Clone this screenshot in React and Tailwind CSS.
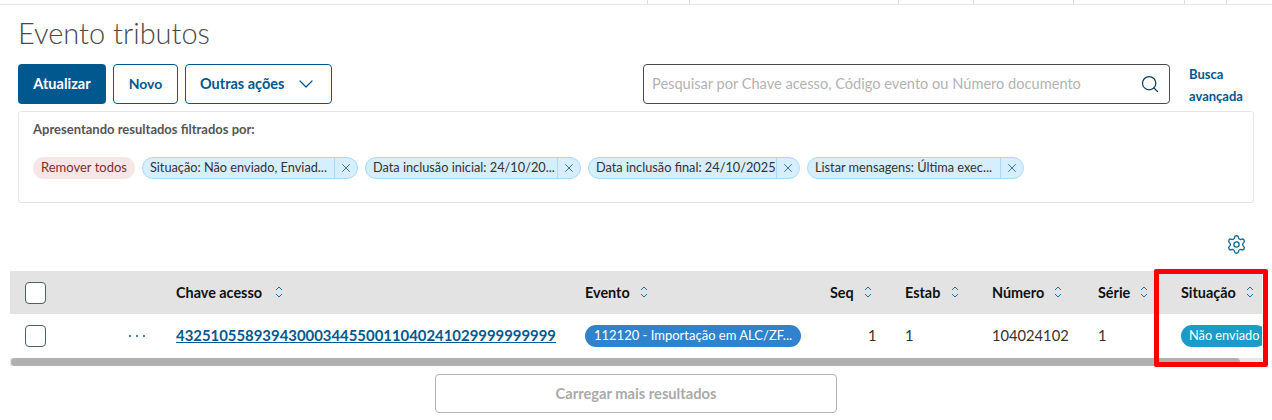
import React from 'react';
import { ChevronDown, Search, Settings, X } from 'lucide-react';

const topTabs = ['w-[648px]', 'w-[42px]', 'w-[209px]', 'w-[75px]', 'w-[100px]', 'w-[111px]', 'w-[42px]'];

const filters = [
    { label: 'Situação: Não enviado, Enviad...', width: 'w-[191px]' },
    { label: 'Data inclusão inicial: 24/10/20...', width: 'w-[191px]' },
    { label: 'Data inclusão final: 24/10/2025', width: 'w-[187px]' },
    { label: 'Listar mensagens: Última exec...', width: 'w-[192px]' },
];

const columns = [
    { label: 'Chave acesso', width: 'w-[409px]', gap: 'ml-[13px]' },
    { label: 'Evento', width: 'w-[245px]', gap: 'ml-[10px]' },
    { label: 'Seq', width: 'w-[75px]', gap: 'ml-[10px]' },
    { label: 'Estab', width: 'w-[87px]', gap: 'ml-[11px]' },
    { label: 'Número', width: 'w-[106px]', gap: 'ml-[10px]' },
    { label: 'Série', width: 'w-[83px]', gap: 'ml-[10px]' },
    { label: 'Situação', width: 'w-[81px]', gap: 'ml-[10px]' },
];

const SortIcon = ({ gap }) => (
    <svg width="8" height="12" viewBox="0 0 8 12" fill="none" stroke="#1a6fa3" strokeWidth="1" className={`${gap} shrink-0`}>
        <path d="M1 4 L4 1 L7 4" />
        <path d="M1 8 L4 11 L7 8" />
    </svg>
);

const Checkbox = () => <div className="w-[21px] h-[22px] bg-white border border-[#4f5f68] rounded-[4px]" />;

const FilterChip = ({ label, width }) => (
    <div className="flex h-[22px] items-center bg-[#d6eefd] border border-[#a9daf9] rounded-full text-[#333333] text-[12.75px]">
        <span className={`${width} pl-[7px] whitespace-nowrap`}>{label}</span>
        <span className="flex items-center justify-center w-[23px] h-full border-l border-[#a9daf9]">
            <X className="w-[14px] h-[14px] text-[#0c4a70]" strokeWidth={1.25} />
        </span>
    </div>
);

export default function App() {
    return (
        <div className="relative w-[1272px] h-[420px] overflow-hidden bg-white font-['Lato','Noto_Sans',sans-serif]">
            <div className="flex h-[5px] border-b border-[#e5e5e5]">
                {topTabs.map((width, i) => (
                    <div key={i} className={`${width} h-full border-r border-[#dddddd]`} />
                ))}
            </div>

            <h1 className="ml-[18px] mt-[10px] h-[37px] text-[29px] leading-[36px] font-light text-[#4a4a4a]">Evento tributos</h1>

            <div className="flex mt-[12px] ml-[18px]">
                <button className="w-[88px] h-10 bg-[#00588f] rounded-[4px] text-white text-[14.5px] font-bold">Atualizar</button>
                <button className="w-[65px] h-10 ml-[7px] border border-[#00588f] rounded-[4px] text-[#00588f] text-sm font-bold">Novo</button>
                <button className="flex items-center w-[147px] h-10 ml-[7px] pl-[14px] border border-[#00588f] rounded-[4px] text-[#00588f] text-[14.5px] font-bold">
                    Outras ações
                    <ChevronDown className="w-6 h-6 ml-[10px]" strokeWidth={1.25} />
                </button>
                <div className="flex items-center justify-between w-[527px] h-10 ml-[311px] pl-2 pr-[9px] border border-[#4a4a4a] rounded-[4px]">
                    <span className="text-[#b3b3b3] text-[14.6px]">Pesquisar por Chave acesso, Código evento ou Número documento</span>
                    <Search className="w-[20px] h-[20px] text-[#0c3c5c]" strokeWidth={1.5} />
                </div>
                <a className="w-[70px] ml-[19px] -mt-px text-[#00588f] text-[13px] leading-[22px] font-bold">Busca avançada</a>
            </div>

            <div className="ml-[18px] mt-[4px] w-[1236px] h-[92px] border border-[#e5e5e5] rounded-[3px] pl-[14px] pt-[8px]">
                <p className="text-[#555555] text-[13px] leading-[18px] font-bold">Apresentando resultados filtrados por:</p>
                <div className="flex gap-[7px] mt-[19px]">
                    <div className="flex items-center h-[22px] px-2 bg-[#f6e6e6] rounded-full text-[#7d2f2a] text-[13px]">Remover todos</div>
                    {filters.map((filter) => (
                        <FilterChip key={filter.label} label={filter.label} width={filter.width} />
                    ))}
                </div>
            </div>

            <div className="flex justify-end h-[68px] pr-[25px] pt-[31px]">
                <Settings className="w-[21px] h-[21px] text-[#0c6a9c]" strokeWidth={1.5} />
            </div>

            <div className="ml-[10px] w-[1252px] overflow-hidden">
                <div className="flex items-center h-[43px] bg-[#e3e3e3] text-[#111111] text-[14.4px] font-bold">
                    <div className="w-[166px] pl-[15px] shrink-0"><Checkbox /></div>
                    {columns.map((col) => (
                        <div key={col.label} className={`flex items-center shrink-0 ${col.width}`}>
                            {col.label}
                            <SortIcon gap={col.gap} />
                        </div>
                    ))}
                </div>

                <div className="flex items-center h-[44px] text-[#333333] text-[14.7px]">
                    <div className="flex items-center w-[166px] pl-[15px] shrink-0">
                        <Checkbox />
                        <span className="flex gap-[5px] ml-[83px]">
                            <span className="w-[2px] h-[2px] rounded-full bg-[#00588f]" />
                            <span className="w-[2px] h-[2px] rounded-full bg-[#00588f]" />
                            <span className="w-[2px] h-[2px] rounded-full bg-[#00588f]" />
                        </span>
                    </div>
                    <div className="w-[409px] shrink-0 -mt-px text-[14.9px] font-bold text-[#00588f] underline">43251055893943000344550011040241029999999999</div>
                    <div className="w-[245px] shrink-0">
                        <span className="flex items-center w-[216px] h-[22px] pl-[9px] bg-[#2e83cc] rounded-full text-white text-[13px] whitespace-nowrap">112120 - Importação em ALC/ZF...</span>
                    </div>
                    <div className="w-[75px] shrink-0 -mt-px pl-[38px]">1</div>
                    <div className="w-[87px] shrink-0 -mt-px">1</div>
                    <div className="w-[106px] shrink-0 -mt-px">104024102</div>
                    <div className="w-[83px] shrink-0 -mt-px">1</div>
                    <div className="w-[81px] shrink-0">
                        <span className="flex items-center w-[86px] h-[22px] pl-2 bg-[#1a9bc8] rounded-full text-white text-[12.75px] whitespace-nowrap">Não enviado</span>
                    </div>
                </div>

                <div className="h-[8px] bg-[#e8e8e8]">
                    <div className="w-[1229px] h-full ml-px bg-[#b0b0b0] rounded-full" />
                </div>
            </div>

            <button className="block ml-[435px] mt-[8px] w-[402px] h-[39px] border border-[#b3b3b3] rounded-[4px] text-[#aaaaaa] text-[14.7px] font-bold">Carregar mais resultados</button>

            {/* marcação vermelha sobre a coluna Situação */}
            <div className="absolute left-[1154px] top-[269px] w-[114px] h-[98px] border-[5px] border-[#ff0000] rounded-[2px]" />
        </div>
    );
}
